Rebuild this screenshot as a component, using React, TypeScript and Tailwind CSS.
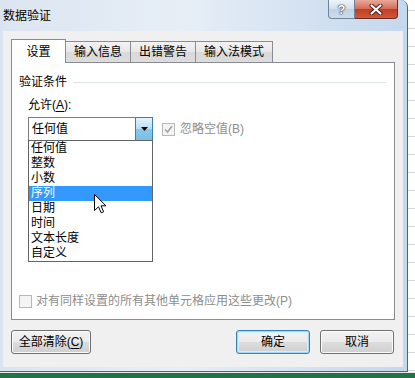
import React from "react";

const options = ["任何值", "整数", "小数", "序列", "日期", "时间", "文本长度", "自定义"];

function Cursor() {
  return (
    <svg width="13" height="20" viewBox="0 0 13 20" className="absolute left-[65px] top-[53px]">
      <path
        d="M0.5 0.5 L0.5 16.5 L4.5 12.8 L7.2 18.8 L9.6 17.8 L7 11.8 L12 11.8 Z"
        fill="#fff"
        stroke="#000"
        strokeWidth="1"
        strokeLinejoin="round"
      />
    </svg>
  );
}

function CheckBox({ checked }: { checked?: boolean }) {
  return (
    <span className="w-[13px] h-[13px] border border-[#b8b8b8] bg-[#f4f4f4] flex items-center justify-center shrink-0">
      {checked && (
        <svg width="9" height="9" viewBox="0 0 9 9">
          <path d="M1 4.5 L3.5 7 L8 1.2" fill="none" stroke="#a3a3a3" strokeWidth="1.6" />
        </svg>
      )}
    </span>
  );
}

function Button({ label, focused, className }: { label: React.ReactNode; focused?: boolean; className?: string }) {
  return (
    <button
      type="button"
      className={`h-[24px] rounded-[3px] border text-[12px] leading-none text-black bg-[linear-gradient(#f2f2f2,#ebebeb_50%,#dddddd_50%,#cfcfcf)] ${
        focused
          ? "border-[#3c7fb1] shadow-[inset_0_0_0_1px_#9fd9f6,inset_0_0_0_2px_#d4eefb]"
          : "border-[#707070] shadow-[inset_0_0_0_1px_#fbfbfb]"
      } ${className ?? ""}`}
    >
      {label}
    </button>
  );
}

export default function App() {
  return (
    <div className="w-[415px] h-[378px] overflow-hidden bg-white flex flex-col text-[12px] text-black font-['Liberation_Sans','Noto_Sans_CJK_SC',sans-serif]">
      <div className="flex h-[372px]">
        {/* dialog window */}
        <div className="w-[408px] h-full flex flex-col rounded-tr-[7px] border-r border-b border-[#52647a] bg-[linear-gradient(to_right,#dbe5f1,#e7eef6_45%,#c4d8ee)]">
          {/* title bar */}
          <div className="h-[31px] flex items-start justify-between pl-[3px] pr-[9px]">
            <span className="mt-[8px] leading-[16px]">数据验证</span>
            <div className="flex">
              <div className="w-[27px] h-[19px] rounded-bl-[4px] border border-t-0 border-[#71839a] bg-[linear-gradient(#eef3f9,#d3dfed_50%,#c1d2e6_50%,#cddbec)] flex items-center justify-center">
                <span className="text-white font-bold text-[13px] leading-none [text-shadow:0_0_1px_#333,0_0_1px_#333,0_0_2px_#555]">?</span>
              </div>
              <div className="w-[43px] h-[19px] rounded-br-[4px] border border-l-0 border-t-0 border-[#6b2b22] bg-[linear-gradient(#e9a99a,#d46a56_50%,#c23b22_50%,#cf5a3c)] flex items-center justify-center">
                <svg width="14" height="11" viewBox="0 0 14 11">
                  <path d="M2.5 1.5 L11.5 9.5 M11.5 1.5 L2.5 9.5" stroke="#4a1a12" strokeWidth="4" strokeLinecap="round" />
                  <path d="M2.5 1.5 L11.5 9.5 M11.5 1.5 L2.5 9.5" stroke="#fff" strokeWidth="2.2" strokeLinecap="round" />
                </svg>
              </div>
            </div>
          </div>

          {/* client area */}
          <div className="flex-1 ml-[3px] mr-[4px] mb-[4px] bg-[#f0f0f0] flex flex-col pl-[8px] pr-[8px] pt-[8px] pb-[13px]">
            {/* tabs */}
            <div className="flex items-end h-[23px]">
              <div className="relative z-10 w-[55px] h-[24px] -mb-px bg-white border border-b-0 border-[#898c95] flex items-center justify-center">
                设置
              </div>
              <div className="-ml-px w-[66px] h-[21px] border border-b-0 border-[#898c95] bg-[linear-gradient(#f3f3f3,#e6e6e6_50%,#d9d9d9_50%,#dcdcdc)] flex items-center justify-center">
                输入信息
              </div>
              <div className="-ml-px w-[66px] h-[21px] border border-b-0 border-[#898c95] bg-[linear-gradient(#f3f3f3,#e6e6e6_50%,#d9d9d9_50%,#dcdcdc)] flex items-center justify-center">
                出错警告
              </div>
              <div className="-ml-px w-[78px] h-[21px] border border-b-0 border-[#898c95] bg-[linear-gradient(#f3f3f3,#e6e6e6_50%,#d9d9d9_50%,#dcdcdc)] flex items-center justify-center">
                输入法模式
              </div>
            </div>

            {/* panel */}
            <div className="h-[258px] bg-white border border-[#898c95] flex flex-col pl-[7px] pr-[8px] pb-[10px]">
              <div className="flex items-center mt-[11px] h-[16px]">
                <span>验证条件</span>
                <div className="flex-1 h-px bg-[#dde3e8] ml-[6px]" />
              </div>
              <div className="pl-[9px] mt-[7px] h-[16px] leading-[16px]">
                允许(<span className="underline underline-offset-2">A</span>):
              </div>
              <div className="pl-[9px] mt-[4px] flex items-center">
                <div className="relative w-[125px] h-[24px] border border-[#7b7b7b] bg-white flex z-10">
                  <span className="flex-1 pl-[3px] flex items-center">任何值</span>
                  <span className="-my-px -mr-px w-[18px] border border-[#3c7fb1] bg-[linear-gradient(#e3f3fc,#b5dcf3_50%,#8cc7ec_50%,#7bbde6)] flex items-center justify-center">
                    <svg width="7" height="4" viewBox="0 0 7 4">
                      <path d="M0 0 H7 L3.5 4 Z" fill="#000" />
                    </svg>
                  </span>
                  {/* open drop-down list */}
                  <ul className="absolute left-[-1px] top-[22px] w-[125px] h-[122px] border border-[#646464] bg-white">
                    {options.map((o) => (
                      <li
                        key={o}
                        className={`h-[15px] leading-[15px] pl-[2px] ${o === "序列" ? "bg-[#3399ff] text-white" : ""}`}
                      >
                        {o}
                      </li>
                    ))}
                    <Cursor />
                  </ul>
                </div>
                <label className="ml-[9px] flex items-center gap-[5px] text-[#8d8d8d]">
                  <CheckBox checked />
                  <span>忽略空值(B)</span>
                </label>
              </div>
              <label className="mt-auto flex items-center gap-[4px] h-[16px] text-[#8d8d8d]">
                <CheckBox />
                <span>对有同样设置的所有其他单元格应用这些更改(P)</span>
              </label>
            </div>

            {/* buttons */}
            <div className="flex mt-[10px]">
              <Button
                className="w-[80px]"
                label={
                  <>
                    全部清除(<span className="underline underline-offset-2">C</span>)
                  </>
                }
              />
              <Button className="w-[74px] ml-auto" label="确定" focused />
              <Button className="w-[74px] ml-[10px] mr-px" label="取消" />
            </div>
          </div>
        </div>

        {/* worksheet behind the dialog */}
        <div className="flex-1 bg-white bg-[repeating-linear-gradient(to_bottom,transparent_0,transparent_10px,#d6d6d6_10px,#d6d6d6_11px,transparent_11px,transparent_18px)]" />
      </div>
      <div className="h-[6px] bg-[#217346] border-t border-[#e8e8e8]" />
    </div>
  );
}
